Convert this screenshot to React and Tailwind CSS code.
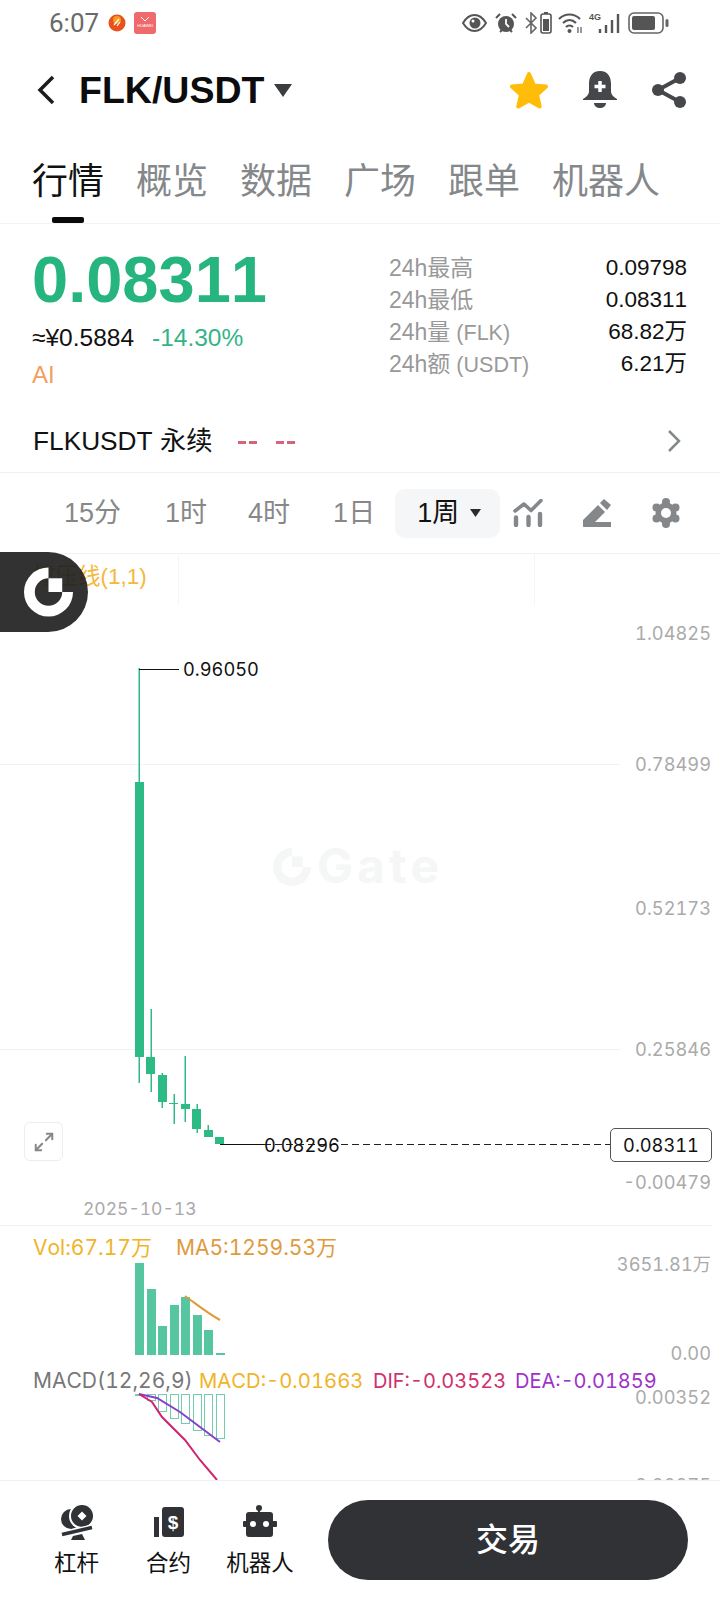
import { Maximize2 } from 'lucide-react';

const candles = [
  { x: 135, top: 782, h: 275, wx: 139, w1: 668, w2: 1083 },
  { x: 146, top: 1057, h: 17, wx: 151, w1: 1009, w2: 1092 },
  { x: 158, top: 1075, h: 27, wx: 162, w1: 1073, w2: 1108 },
  { x: 169, top: 1103, h: 1, wx: 174, w1: 1094, w2: 1124 },
  { x: 181, top: 1104, h: 5, wx: 185, w1: 1056, w2: 1122 },
  { x: 192, top: 1109, h: 20, wx: 197, w1: 1104, w2: 1133 },
  { x: 204, top: 1130, h: 7, wx: 208, w1: 1125, w2: 1137 },
  { x: 215, top: 1137, h: 7, wx: 220, w1: 1137, w2: 1144 },
];

const volBars = [
  { x: 135, top: 1263 },
  { x: 147, top: 1289 },
  { x: 158, top: 1326 },
  { x: 170, top: 1305 },
  { x: 181, top: 1297 },
  { x: 193, top: 1315 },
  { x: 204, top: 1330 },
  { x: 216, top: 1353 },
];

const macdBars = [
  { x: 135, bottom: 1395 },
  { x: 147, bottom: 1400 },
  { x: 158, bottom: 1411 },
  { x: 170, bottom: 1418 },
  { x: 181, bottom: 1423 },
  { x: 193, bottom: 1430 },
  { x: 204, bottom: 1435 },
  { x: 216, bottom: 1438 },
];

const stats = [
  ['24h最高', '', '0.09798'],
  ['24h最低', '', '0.08311'],
  ['24h量', ' (FLK)', '68.82万'],
  ['24h额', ' (USDT)', '6.21万'],
];

function StatusBar() {
  return (
    <div className="h-[46px] flex items-center justify-between pl-[49px] pr-[51px]">
      <div className="flex items-center">
        <span className="text-[26px] leading-[30px] text-[#6a6a6a] font-['Roboto',sans-serif]">6:07</span>
        <svg width="18" height="18" viewBox="0 0 18 18" className="ml-[9px]">
          <circle cx="9" cy="9" r="8.500" fill="#e8501c" />
          <circle cx="9" cy="6" r="4" fill="#f59a23" />
          <path d="M6 11l5-6M9 12l3-4" stroke="#fff" strokeWidth="1.200" />
        </svg>
        <div className="ml-[8px] w-[22px] h-[22px] rounded-[3px] bg-[#ef6a6d] flex flex-col items-center pt-[4px]">
          <svg width="10" height="6" viewBox="0 0 10 6">
            <path d="M1 1l4 4 4-4" stroke="#fff" strokeWidth="1" fill="none" />
          </svg>
          <span className="text-[4px] leading-[6px] mt-[1px] text-white">HUAWEI</span>
        </div>
      </div>
      <div className="flex items-center text-[#555]">
        <svg width="25" height="18" viewBox="0 0 25 18">
          <path d="M1 9c3-5 7-8 11.500-8S21 4 24 9c-3 5-7 8-11.500 8S4 14 1 9z" fill="none" stroke="#555" strokeWidth="2" />
          <circle cx="13" cy="9" r="5.500" fill="#555" />
          <circle cx="11" cy="7" r="1.500" fill="#fff" />
        </svg>
        <svg width="24" height="22" viewBox="0 0 24 22" className="ml-[7px]">
          <circle cx="12" cy="12" r="8" fill="#555" />
          <path d="M12 7v5l3 3" stroke="#fff" strokeWidth="1.800" fill="none" />
          <path d="M2 6l4-4M22 6l-4-4M6 20l2-2M18 20l-2-2" stroke="#555" strokeWidth="2" />
        </svg>
        <svg width="14" height="22" viewBox="0 0 14 22" className="ml-[6px]">
          <path d="M2 6l10 10-5 5V1l5 5L2 16" stroke="#666" strokeWidth="1.600" fill="none" />
        </svg>
        <svg width="12" height="22" viewBox="0 0 12 22" className="ml-[2px]">
          <rect x="4" y="0" width="4" height="2" fill="#555" />
          <rect x="1" y="2" width="10" height="19" rx="2" fill="none" stroke="#555" strokeWidth="1.600" />
          <rect x="3" y="7" width="6" height="12" fill="#555" />
        </svg>
        <svg width="25" height="22" viewBox="0 0 25 22" className="ml-[6px]">
          <path d="M1 7c6-6 15-6 21 0M5 11c4-4 9-4 13 0M8 15c2-2 5-2 7 0" stroke="#555" strokeWidth="2.200" fill="none" />
          <circle cx="11.500" cy="19" r="2" fill="#555" />
          <path d="M20 15v6M23 15v6" stroke="#555" strokeWidth="1.200" />
        </svg>
        <span className="ml-[6px] self-start text-[9px] leading-[10px] text-[#555] font-bold">4G</span>
        <svg width="22" height="22" viewBox="0 0 22 22" className="-ml-[3px]">
          <path d="M2 17v4M8 13v8M14 8v13M20 2v19" stroke="#555" strokeWidth="2.400" />
        </svg>
        <svg width="41" height="22" viewBox="0 0 41 22" className="ml-[8px]">
          <rect x="1" y="1" width="34" height="20" rx="5" fill="none" stroke="#666" strokeWidth="1.600" />
          <rect x="4" y="4" width="23" height="14" rx="2" fill="#555" />
          <rect x="37.500" y="7" width="3" height="8" rx="1.500" fill="#666" />
        </svg>
      </div>
    </div>
  );
}

function NavBar() {
  return (
    <div className="h-[88px] flex items-center pl-[36px]">
      <svg width="20" height="30" viewBox="0 0 20 30">
        <path d="M17 2L4 15l13 13" stroke="#1c1c1c" strokeWidth="3.500" fill="none" />
      </svg>
      <span className="ml-[23px] text-[37.500px] leading-[44px] font-bold text-[#0c0c0c]">FLK/USDT</span>
      <svg width="18" height="13" viewBox="0 0 18 13" className="ml-[10px]">
        <path d="M0 0h18L9 13z" fill="#3a3c3f" />
      </svg>
      <svg width="40" height="38" viewBox="0 0 40 38" className="ml-[217px]">
        <path d="M20 3l5 11.500 12 1.100-9 8.200 2.700 11.700L20 29.400 9.300 35.500 12 23.800 3 15.600l12-1.100z" fill="#ffbd0a" stroke="#ffbd0a" strokeWidth="4" strokeLinejoin="round" />
      </svg>
      <svg width="34" height="38" viewBox="0 0 34 38" className="ml-[34px]">
        <path d="M17 0C9 0 6 6 6 13v7c0 4-3 6-6 8v1h34v-1c-3-2-6-4-6-8v-7c0-7-3-13-11-13z" fill="#45474b" />
        <path d="M11 32h12c0 3-3 5-6 5s-6-2-6-5z" fill="#45474b" />
        <path d="M17 10v11M11.500 15.500h11" stroke="#fff" strokeWidth="3.500" />
      </svg>
      <svg width="34" height="36" viewBox="0 0 34 36" className="ml-[35px]">
        <path d="M28 6L6 18l22 12" stroke="#45474b" strokeWidth="4" fill="none" />
        <circle cx="28" cy="6" r="6" fill="#45474b" />
        <circle cx="6" cy="18" r="6" fill="#45474b" />
        <circle cx="28" cy="30" r="6" fill="#45474b" />
      </svg>
    </div>
  );
}

function Tabs() {
  const rest = ['概览', '数据', '广场', '跟单', '机器人'];
  return (
    <div className="h-[90px] border-b border-[#f2f3f3] pt-[30px] pl-[32px] flex gap-[32px] text-[36px] leading-[36px]">
      <div className="flex flex-col">
        <span className="text-[#111]">行情</span>
        <div className="mt-[17px] mx-auto w-[32px] h-[6px] rounded-[2px] bg-[#0a0a0a]" />
      </div>
      {rest.map((t) => (
        <span key={t} className="text-[#85888b]">{t}</span>
      ))}
    </div>
  );
}

function PriceBlock() {
  return (
    <div className="h-[186px] flex justify-between pl-[32px] pr-[33px]">
      <div className="pt-[24px]">
        <div className="text-[65px] leading-[64px] font-bold text-[#27b57f]">0.08311</div>
        <div className="mt-[10px] flex text-[24.500px] leading-[32px]">
          <span className="text-[#111]">≈¥0.5884</span>
          <span className="ml-[18px] text-[#35b388]">-14.30%</span>
        </div>
        <div className="mt-[5px] text-[24px] leading-[32px] text-[#f2a062]">AI</div>
      </div>
      <div className="pt-[28px] w-[298px]">
        {stats.map(([label, unit, value]) => (
          <div key={label} className="h-[32px] flex items-center justify-between text-[23px] leading-[32px]">
            <span className="text-[#999] whitespace-pre">{label}<span className="text-[21.500px]">{unit}</span></span>
            <span className="text-[#111] text-[22.500px]">{value}</span>
          </div>
        ))}
      </div>
    </div>
  );
}

function PerpRow() {
  return (
    <div className="h-[63px] border-b border-[#f0f1f1] flex items-center pl-[33px] pr-[38px]">
      <span className="text-[26.250px] leading-[32px] text-[#111]">FLKUSDT 永续</span>
      <div className="ml-[26px] mt-[2px] flex gap-[19px]">
        <div className="flex gap-[3px]">
          <div className="w-[8px] h-[3px] bg-[#d4637c]" />
          <div className="w-[8px] h-[3px] bg-[#d4637c]" />
        </div>
        <div className="flex gap-[3px]">
          <div className="w-[8px] h-[3px] bg-[#d4637c]" />
          <div className="w-[8px] h-[3px] bg-[#d4637c]" />
        </div>
      </div>
      <svg width="15" height="24" viewBox="0 0 15 24" className="ml-auto">
        <path d="M2 2l10 10L2 22" stroke="#85888b" strokeWidth="2.500" fill="none" />
      </svg>
    </div>
  );
}

function Toolbar() {
  return (
    <div className="h-[81px] border-b border-[#f2f3f3] flex items-center pl-[64px] text-[27px] leading-[32px] text-[#888]">
      <span>15分</span>
      <span className="ml-[44px]">1时</span>
      <span className="ml-[41px]">4时</span>
      <span className="ml-[43px]">1日</span>
      <div className="ml-[20px] w-[105px] h-[49px] rounded-[10px] bg-[#f5f6f7] flex items-center pl-[22px] text-[#111]">
        <span>1周</span>
        <svg width="11" height="8" viewBox="0 0 11 8" className="ml-[11px]">
          <path d="M0 0h11L5.500 8z" fill="#2a2c2f" />
        </svg>
      </div>
      <svg width="30" height="28" viewBox="0 0 30 28" className="ml-[13px]">
        <path d="M2 12l9-7 7 6.500L28 1.500" stroke="#85888b" strokeWidth="3.600" strokeLinecap="round" strokeLinejoin="round" fill="none" />
        <path d="M3 18.500V26M15.500 18v8M27 15v11" stroke="#85888b" strokeWidth="4.400" strokeLinecap="round" />
      </svg>
      <svg width="28" height="28" viewBox="0 0 28 28" className="ml-[40px]">
        <path d="M0 21L15 6l7 7-10 10h16v5H1c-.6 0-1-.4-1-1z" fill="#85888b" />
        <path d="M17 4l4-4 7 6-4 5z" fill="#85888b" />
      </svg>
      <svg width="28" height="30" viewBox="0 0 28 30" className="ml-[41px]">
        <circle cx="14" cy="15" r="10.500" fill="#85888b" />
        <circle cx="14" cy="4" r="4" fill="#85888b" />
        <circle cx="14" cy="26" r="4" fill="#85888b" />
        <circle cx="4.500" cy="9.500" r="4" fill="#85888b" />
        <circle cx="23.500" cy="9.500" r="4" fill="#85888b" />
        <circle cx="4.500" cy="20.500" r="4" fill="#85888b" />
        <circle cx="23.500" cy="20.500" r="4" fill="#85888b" />
        <circle cx="14" cy="15" r="5" fill="#fff" />
      </svg>
    </div>
  );
}

function ChartDrawing() {
  return (
    <svg width="720" height="926" viewBox="0 554 720 926" className="absolute left-0 top-0">
      <path d="M178.500 554v51M534.500 554v51" stroke="#f5f5f5" />
      <path d="M0 764.500h620M0 1049.500h620M0 1225.500h712" stroke="#f1f2f2" />
      {candles.map((c) => (
        <g key={c.x}>
          <rect x={c.wx - 0.5} y={c.w1} width="1.500" height={c.w2 - c.w1} fill="#2fbb87" />
          <rect x={c.x} y={c.top} width="9" height={c.h} fill="#2dbb85" />
        </g>
      ))}
      <path d="M139 669.500h40" stroke="#111" />
      <path d="M220 1144.500h44" stroke="#111" />
      <path d="M264 1144.500h346" stroke="#222" strokeDasharray="7 4" />
      {volBars.map((b) => (
        <rect key={b.x} x={b.x} y={b.top} width="9" height={1355 - b.top} fill="#55c69f" />
      ))}
      <path d="M185 1296c10 7 22 17 35 24" stroke="#e09a3e" strokeWidth="2" fill="none" />
      {macdBars.map((b) => (
        <rect key={b.x} x={b.x + 0.5} y="1394.500" width="8" height={b.bottom - 1394} fill="none" stroke="#72ccae" />
      ))}
      <path d="M139 1394l18 4 23 14 20 15 20 15" stroke="#8a3fc8" strokeWidth="2" fill="none" />
      <path d="M139 1394l13 8 10 15 23 23 15 20 17 20" stroke="#d0246e" strokeWidth="2" fill="none" />
      <g transform="translate(273 848) scale(0.76)" fill="#f5f6f6">
        <path d="M25 0v11a14 14 0 1 0 14 14h11A25 25 0 1 1 25 0z" />
        <rect x="25" y="11" width="14" height="14" />
      </g>
    </svg>
  );
}

function Chart() {
  return (
    <div className="relative h-[926px]">
      <div className="absolute inset-0 overflow-hidden tabular-nums text-[18.250px] leading-[24px] font-['Inter','Noto_Sans_CJK_SC',sans-serif]">
        <ChartDrawing />

        <span className="absolute left-[317px] top-[288px] text-[48px] leading-[48px] tracking-[4px] font-bold text-[#f5f6f6]">Gate</span>

        <span className="absolute left-[33px] top-[11px] text-[#f5b83d] text-[22.500px] font-['Liberation_Sans','Noto_Sans_CJK_SC',sans-serif]">撑压线(1,1)</span>

        <span className="absolute right-[9px] top-[67px] text-[#aaa]">1.04825</span>
        <span className="absolute right-[9px] top-[198px] text-[#aaa]">0.78499</span>
        <span className="absolute right-[9px] top-[342px] text-[#aaa]">0.52173</span>
        <span className="absolute right-[9px] top-[483px] text-[#aaa]">0.25846</span>
        <span className="absolute right-[9px] top-[616px] text-[#aaa]">-0.00479</span>
        <span className="absolute right-[9px] top-[698px] text-[#aaa]">3651.81万</span>
        <span className="absolute right-[9px] top-[787px] text-[#aaa]">0.00</span>
        <span className="absolute right-[9px] top-[831px] text-[#aaa]">0.00352</span>
        <span className="absolute right-[9px] top-[919px] text-[#aaa]">0.00075</span>

        <span className="absolute left-[183px] top-[103px] text-[#111]">0.96050</span>
        <span className="absolute left-[264px] top-[579px] text-[#111]">0.08296</span>
        <div className="absolute left-[610px] top-[574px] w-[102px] h-[34px] rounded-[5px] border border-[#555] bg-white flex items-center justify-center text-[#111]">
          0.08311
        </div>

        <div className="absolute left-[24px] top-[568px] w-[39px] h-[39px] rounded-[6px] border border-[#eceded] bg-white flex items-center justify-center">
          <Maximize2 size={22} className="text-[#85888b]" strokeWidth={2.2} />
        </div>

        <span className="absolute left-[83px] top-[643px] text-[17.500px] text-[#aaa]">2025-10-13</span>

        <div className="absolute left-[33px] top-[682px] text-[21px] text-[#f0b429]">Vol:67.17万</div>
        <div className="absolute left-[176px] top-[682px] text-[21px] text-[#e09a3e]">MA5:1259.53万</div>

        <div className="absolute left-[33px] top-[815px] text-[21px] text-[#777]">MACD(12,26,9)</div>
        <div className="absolute left-[199px] top-[815px] text-[20.250px] text-[#f0b429]">MACD:-0.01663</div>
        <div className="absolute left-[373px] top-[815px] text-[20px] text-[#d0306e]">DIF:-0.03523</div>
        <div className="absolute left-[515px] top-[815px] text-[20px] text-[#a032c8]">DEA:-0.01859</div>
      </div>

      <div className="absolute left-0 top-[-2px] w-[88px] h-[80px] rounded-r-[40px] bg-[#1c1c1c]/90 flex items-center pl-[24px]">
        <svg width="49" height="50" viewBox="0 0 50 50">
          <path d="M25 0v11a14 14 0 1 0 14 14h11A25 25 0 1 1 25 0z" fill="#fff" />
          <rect x="25" y="11" width="14" height="14" fill="#fff" />
        </svg>
      </div>
    </div>
  );
}

function BottomBar() {
  return (
    <div className="h-[120px] border-t border-[#f0f1f1] flex pt-[19px] text-[22.500px] leading-[28px] text-[#111]">
      <div className="ml-[54px] w-[45px] pt-[5px] flex flex-col items-center">
        <div className="h-[36px]">
          <svg width="34" height="36" viewBox="0 0 34 36">
            <circle cx="11" cy="14" r="10" fill="#303236" />
            <circle cx="22" cy="11" r="13" fill="#fff" />
            <circle cx="22" cy="11" r="11" fill="#303236" />
            <path d="M22 6.500l4.500 4.500-4.500 4.500-4.500-4.500z" fill="#fff" />
            <path d="M2 29.500l30-7" stroke="#fff" strokeWidth="6" />
            <path d="M2 29.500l30-7" stroke="#303236" strokeWidth="3.500" />
            <path d="M13 31l9-2 3 6H11z" fill="#303236" />
          </svg>
        </div>
        <span className="mt-[9px]">杠杆</span>
      </div>
      <div className="ml-[47px] w-[45px] pt-[5px] flex flex-col items-center">
        <div className="h-[36px] pt-[2px]">
          <svg width="30" height="30" viewBox="0 0 30 30">
            <rect x="0" y="10" width="5" height="20" fill="#303236" />
            <rect x="8" y="0" width="22" height="30" rx="3" fill="#303236" />
            <text x="19" y="22" textAnchor="middle" fontSize="19" fontWeight="700" fill="#fff" fontFamily="Liberation Sans">$</text>
          </svg>
        </div>
        <span className="mt-[9px]">合约</span>
      </div>
      <div className="ml-[35px] w-[68px] pt-[5px] flex flex-col items-center">
        <div className="h-[36px]">
          <svg width="34" height="32" viewBox="0 0 34 32">
            <circle cx="16" cy="3" r="3" fill="#303236" />
            <rect x="15" y="3" width="2" height="5" fill="#303236" />
            <rect x="3" y="7" width="27" height="25" rx="3" fill="#303236" />
            <rect x="0" y="16" width="34" height="6" rx="1" fill="#303236" />
            <circle cx="10" cy="19" r="3" fill="#fff" />
            <circle cx="23" cy="19" r="3" fill="#fff" />
          </svg>
        </div>
        <span className="mt-[9px] whitespace-nowrap">机器人</span>
      </div>
      <button className="ml-[34px] w-[360px] h-[80px] rounded-full bg-[#303236] text-white text-[32px] font-medium">
        交易
      </button>
    </div>
  );
}

export default function App() {
  return (
    <div className="w-[720px] h-[1600px] bg-white overflow-hidden [font-kerning:none] font-['Liberation_Sans','Noto_Sans_CJK_SC',sans-serif]">
      <StatusBar />
      <NavBar />
      <Tabs />
      <PriceBlock />
      <PerpRow />
      <Toolbar />
      <Chart />
      <BottomBar />
    </div>
  );
}
